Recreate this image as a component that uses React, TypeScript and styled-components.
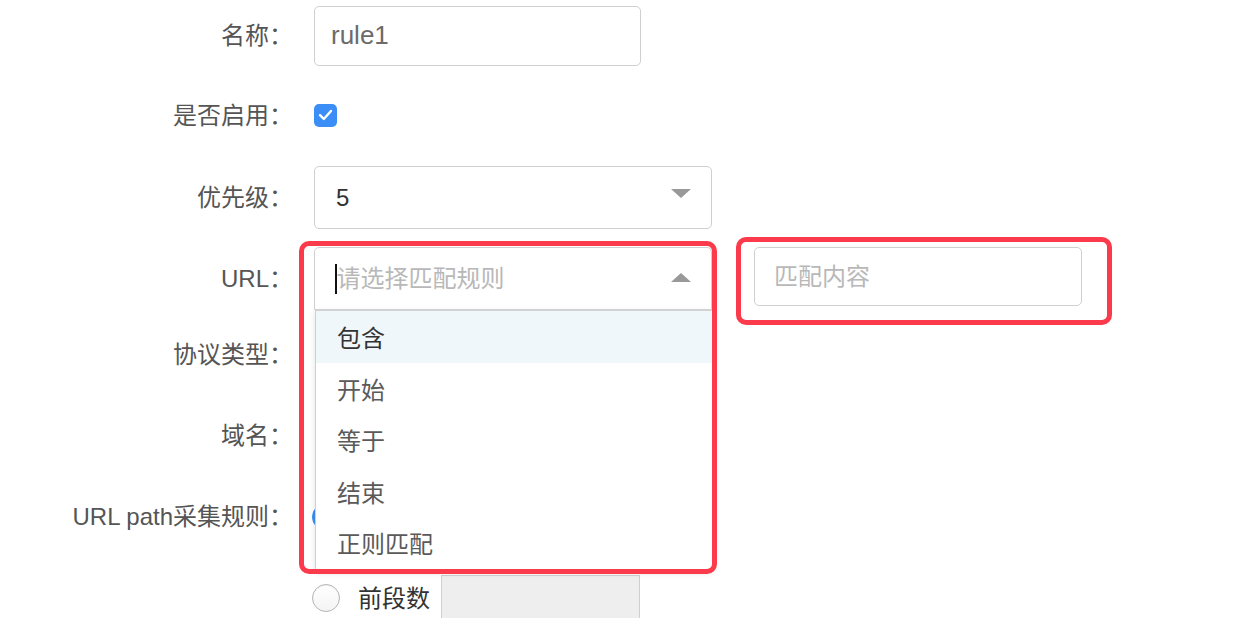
import React from "react";
import styled, { createGlobalStyle } from "styled-components";

const Global = createGlobalStyle`
  html, body { margin: 0; padding: 0; background: #fff; overflow: hidden; }
  body { font-family: "Liberation Sans", "Noto Sans CJK SC", sans-serif; }
  * { box-sizing: border-box; }
`;

const Form = styled.div`
  display: flex;
  flex-direction: column;
  padding-top: 6px;
  width: 1248px;
  height: 618px;
  overflow: hidden;
`;

const Row = styled.div<{ $h: number; $mt: number }>`
  display: flex;
  align-items: center;
  height: ${(p) => p.$h}px;
  margin-top: ${(p) => p.$mt}px;
  flex-shrink: 0;
`;

const Label = styled.div`
  width: 293px;
  flex-shrink: 0;
  text-align: right;
  font-size: 24px;
  color: #555;
  padding-bottom: 5px;
  margin-right: 21px;
  white-space: nowrap;
`;

const Controls = styled.div`
  display: flex;
  align-items: center;
  height: 100%;
  position: relative;
`;

const TextInput = styled.div<{ $w: number; $pad: number; $placeholder?: boolean }>`
  width: ${(p) => p.$w}px;
  height: 100%;
  border: 1px solid #cfcfcf;
  border-radius: 5px;
  display: flex;
  align-items: center;
  padding-left: ${(p) => p.$pad}px;
  padding-bottom: ${(p) => (p.$placeholder ? 5 : 2)}px;
  font-size: ${(p) => (p.$placeholder ? 24 : 26)}px;
  color: ${(p) => (p.$placeholder ? "#b8b8b8" : "#6b6b6b")};
`;

const SelectBox = styled.div<{ $open?: boolean }>`
  width: 398px;
  height: 100%;
  border: 1px solid #cfcfcf;
  border-radius: ${(p) => (p.$open ? "5px 5px 0 0" : "5px")};
  display: flex;
  align-items: center;
  padding-left: 21px;
  padding-right: 20px;
  font-size: 24px;
  color: #333;
  position: relative;
`;

const SelectValue = styled.span<{ $placeholder?: boolean }>`
  flex: 1;
  color: ${(p) => (p.$placeholder ? "#b8b8b8" : "#333")};
  display: flex;
  align-items: center;
  padding-bottom: ${(p) => (p.$placeholder ? 5 : 0)}px;
`;

const Caret = styled.span`
  display: inline-block;
  width: 1.5px;
  height: 30px;
  background: #111;
  margin-left: -1px;
  margin-top: 5px;
`;

const Arrow = styled.span<{ $up?: boolean }>`
  width: 0;
  height: 0;
  border-left: 10px solid transparent;
  border-right: 10px solid transparent;
  ${(p) =>
    p.$up
      ? "border-bottom: 9px solid #999; margin-bottom: 3px;"
      : "border-top: 9px solid #999; margin-bottom: 8px;"}
`;

const Checkbox = styled.span`
  width: 23px;
  height: 23px;
  border-radius: 5px;
  background: #3a8ef6;
  display: flex;
  align-items: center;
  justify-content: center;
  margin-bottom: 2px;
`;

const Menu = styled.div`
  position: absolute;
  left: 0;
  top: 100%;
  width: 398px;
  background: #fff;
  border: 1px solid #cfcfcf;
  border-top: 2px solid #d2d2d2;
  box-shadow: 0 3px 6px rgba(0, 0, 0, 0.12);
  z-index: 2;
`;

const MenuItem = styled.div<{ $active?: boolean }>`
  height: 51.5px;
  display: flex;
  align-items: center;
  padding-left: 21px;
  font-size: 24px;
  color: ${(p) => (p.$active ? "#333" : "#5a5a5a")};
  background: ${(p) => (p.$active ? "#eff7fb" : "#fff")};
`;

const Highlight = styled.div<{ $l: number; $t: number; $w: number; $h: number }>`
  position: absolute;
  left: ${(p) => p.$l}px;
  top: ${(p) => p.$t}px;
  width: ${(p) => p.$w}px;
  height: ${(p) => p.$h}px;
  border: 5px solid #fb3a4b;
  border-radius: 10px;
  z-index: 3;
  pointer-events: none;
`;

const MatchWrap = styled.div`
  position: relative;
  height: 59px;
  margin-left: 42px;
  align-self: flex-start;
`;

const Radio = styled.span<{ $checked?: boolean }>`
  width: 28px;
  height: 28px;
  border-radius: 50%;
  flex-shrink: 0;
  margin-left: -2px;
  border: 1px solid ${(p) => (p.$checked ? "#3a8ef6" : "#b5b5b5")};
  background: ${(p) =>
    p.$checked ? "#3a8ef6" : "linear-gradient(#fff, #f4f4f4)"};
  box-shadow: inset 0 1px 1px rgba(0, 0, 0, 0.06);
`;

const RadioText = styled.span`
  font-size: 24px;
  color: #333;
  margin-left: 18px;
  padding-bottom: 4px;
  white-space: nowrap;
`;

const GreyInput = styled.div`
  width: 199px;
  align-self: stretch;
  margin-left: 11px;
  background: #eeeeee;
  border: 1px solid #cfcfcf;
  border-bottom: none;
`;

const options = ["包含", "开始", "等于", "结束", "正则匹配"];

export default function App() {
  return (
    <>
      <Global />
      <Form>
        <Row $h={60} $mt={0}>
          <Label>名称：</Label>
          <Controls>
            <TextInput $w={327} $pad={16}>rule1</TextInput>
          </Controls>
        </Row>
        <Row $h={60} $mt={20}>
          <Label>是否启用：</Label>
          <Controls>
            <Checkbox>
              <svg width="15" height="12" viewBox="0 0 15 12">
                <path
                  d="M2 6.2 L5.8 10 L13 2"
                  fill="none"
                  stroke="#fff"
                  strokeWidth="2.4"
                  strokeLinecap="round"
                  strokeLinejoin="round"
                />
              </svg>
            </Checkbox>
          </Controls>
        </Row>
        <Row $h={63} $mt={20}>
          <Label>优先级：</Label>
          <Controls>
            <SelectBox>
              <SelectValue>5</SelectValue>
              <Arrow />
            </SelectBox>
          </Controls>
        </Row>
        <Row $h={63} $mt={18}>
          <Label>URL：</Label>
          <Controls>
            <SelectBox $open>
              <SelectValue $placeholder>
                <Caret />
                请选择匹配规则
              </SelectValue>
              <Arrow $up />
              <Menu>
                {options.map((o, i) => (
                  <MenuItem key={o} $active={i === 0}>
                    {o}
                  </MenuItem>
                ))}
              </Menu>
              <Highlight $l={-16} $t={-7} $w={418} $h={333} />
            </SelectBox>
            <MatchWrap>
              <TextInput $w={328} $pad={19} $placeholder>
                匹配内容
              </TextInput>
              <Highlight $l={-18} $t={-10} $w={376} $h={88} />
            </MatchWrap>
          </Controls>
        </Row>
        <Row $h={60} $mt={15}>
          <Label>协议类型：</Label>
        </Row>
        <Row $h={60} $mt={21}>
          <Label>域名：</Label>
        </Row>
        <Row $h={60} $mt={21}>
          <Label>URL path采集规则：</Label>
          <Controls>
            <Radio $checked />
          </Controls>
        </Row>
        <Row $h={46} $mt={28}>
          <Label />
          <Controls>
            <Radio />
            <RadioText>前段数</RadioText>
            <GreyInput />
          </Controls>
        </Row>
      </Form>
    </>
  );
}
